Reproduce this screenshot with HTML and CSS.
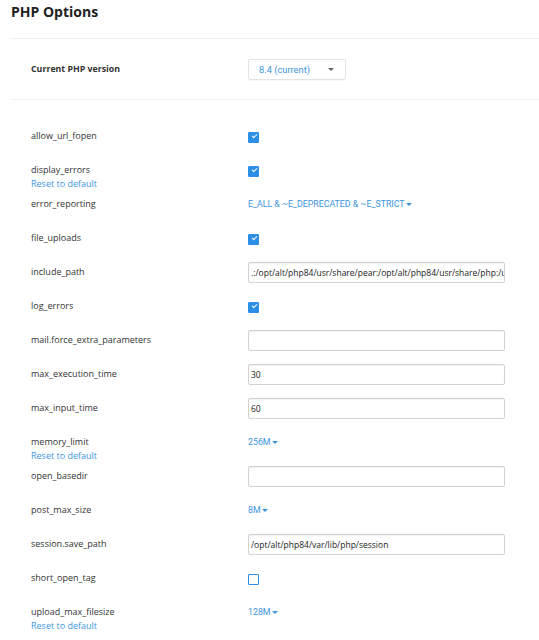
FILE: index.html
```html
<!DOCTYPE html>
<html>
<head>
<meta charset="utf-8">
<link rel="stylesheet" href="styles.css">
</head>
<body>
<div class="page">
  <header class="head"><h1>PHP Options</h1></header>
  <section class="version">
    <div class="version-label">Current PHP version</div>
    <div class="select"><span>8.4 (current)</span><span class="caret"></span></div>
  </section>
  <section class="options">
    <div class="row"><div class="label">allow_url_fopen</div><div class="ctl"><span class="cb on"></span></div></div>
    <div class="row"><div class="label">display_errors<a class="reset">Reset to default</a></div><div class="ctl"><span class="cb on"></span></div></div>
    <div class="row"><div class="label">error_reporting</div><div class="ctl"><span class="dd">E_ALL &amp; ~E_DEPRECATED &amp; ~E_STRICT<span class="caret"></span></span></div></div>
    <div class="row"><div class="label">file_uploads</div><div class="ctl"><span class="cb on"></span></div></div>
    <div class="row"><div class="label">include_path</div><div class="ctl"><div class="input">.:/opt/alt/php84/usr/share/pear:/opt/alt/php84/usr/share/php:/usr/share/pear:/usr/share/php</div></div></div>
    <div class="row"><div class="label">log_errors</div><div class="ctl"><span class="cb on"></span></div></div>
    <div class="row"><div class="label">mail.force_extra_parameters</div><div class="ctl"><div class="input"></div></div></div>
    <div class="row"><div class="label">max_execution_time</div><div class="ctl"><div class="input">30</div></div></div>
    <div class="row"><div class="label">max_input_time</div><div class="ctl"><div class="input">60</div></div></div>
    <div class="row"><div class="label">memory_limit<a class="reset">Reset to default</a></div><div class="ctl"><span class="dd">256M<span class="caret"></span></span></div></div>
    <div class="row"><div class="label">open_basedir</div><div class="ctl"><div class="input"></div></div></div>
    <div class="row"><div class="label">post_max_size</div><div class="ctl"><span class="dd">8M<span class="caret"></span></span></div></div>
    <div class="row"><div class="label">session.save_path</div><div class="ctl"><div class="input">/opt/alt/php84/var/lib/php/session</div></div></div>
    <div class="row"><div class="label">short_open_tag</div><div class="ctl"><span class="cb"></span></div></div>
    <div class="row"><div class="label">upload_max_filesize<a class="reset">Reset to default</a></div><div class="ctl"><span class="dd">128M<span class="caret"></span></span></div></div>
  </section>
</div>
</body>
</html>
```
FILE: styles.css
```css
html, body { margin: 0; padding: 0; background: #fff; }
body { font-family: "Open Sans", "Noto Sans", sans-serif; color: #333; font-size: 9px; }
.page { padding-left: 11px; overflow: hidden; height: 640px; }
.head { height: 38px; border-bottom: 1px solid #efefef; }
.head h1 { margin: 0; padding-top: 2px; font-size: 14px; line-height: 20px; font-weight: 700; color: #222; }
.version { height: 60px; border-bottom: 1px solid #efefef; display: grid; grid-template-columns: 217px auto; align-items: center; padding-left: 20px; }
.version-label { font-weight: 700; font-size: 8.8px; color: #333; }
.select { width: 98px; height: 21px; box-sizing: border-box; border: 1px solid #e3e3e3; border-radius: 2px; display: flex; align-items: center; justify-content: space-between; padding: 0 11px 0 10px; font-family: Roboto, "Liberation Sans", sans-serif; color: #3d95de; font-size: 9.3px; box-shadow: 0 1px 1px rgba(0,0,0,0.03); justify-self: start; }
.select .caret { border-top: 3px solid #666; border-left: 3px solid transparent; border-right: 3px solid transparent; }
.options { padding-top: 26px; }
.row { height: 34px; display: grid; grid-template-columns: 217px 257px; padding-left: 20px; align-items: start; }
.label { padding-top: 3px; line-height: 14px; font-size: 9px; color: #333; display: flex; flex-direction: column; align-items: flex-start; }
.reset { color: #3d95de; line-height: 13px; cursor: pointer; }
.ctl { height: 21px; display: flex; align-items: center; }
.cb { width: 11px; height: 11px; box-sizing: border-box; border: 1.5px solid #2d8ee5; border-radius: 1px; background: #fff; position: relative; margin-top: 1px; }
.cb.on { background: #2d8ee5; }
.cb.on::after { content: ""; position: absolute; left: 2.5px; top: 1.2px; width: 4px; height: 2px; border-left: 1px solid #fff; border-bottom: 1px solid #fff; transform: rotate(-45deg); }
.dd { color: #3d95de; font-family: Roboto, "Liberation Sans", sans-serif; font-size: 8.8px; display: inline-flex; align-items: center; margin-top: -1px; }
.dd .caret { border-top: 3px solid #3d95de; border-left: 3px solid transparent; border-right: 3px solid transparent; margin-left: 1px; }
.input { width: 257px; height: 21px; box-sizing: border-box; border: 1px solid #d2d2d2; border-radius: 2px; box-shadow: inset 0 1px 1px rgba(0,0,0,0.06); padding: 0 2px; line-height: 19px; font-size: 8.5px; color: #222; white-space: nowrap; overflow: hidden; }
```
